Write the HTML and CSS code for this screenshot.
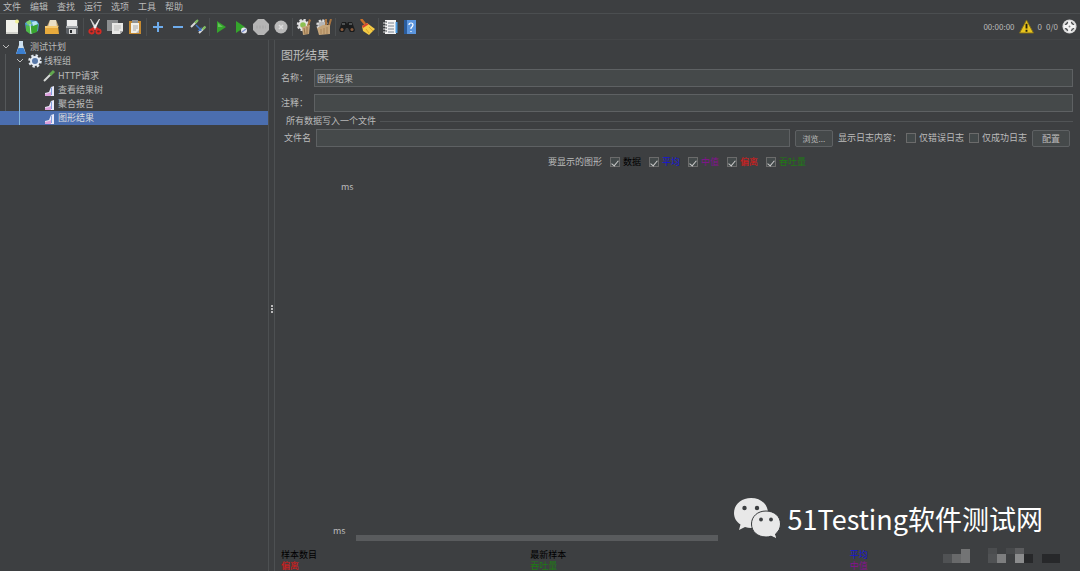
FILE: index.html
```html
<!DOCTYPE html>
<html lang="zh-CN">
<head>
<meta charset="utf-8">
<title>图形结果</title>
<link rel="stylesheet" href="styles.css">
</head>
<body>
<div class="app">
  <nav class="menu">
    <button>文件</button><button>编辑</button><button>查找</button><button>运行</button><button>选项</button><button>工具</button><button>帮助</button>
  </nav>

  <header class="toolbar">
    <div class="tools">
      <button aria-label="新建"><svg viewBox="0 0 16 16"><path d="M2 1h12v14H2z" fill="#f1f1ea"/><path d="M2 13h12v2H2z" fill="#d2d2cc"/><circle cx="13" cy="2.500" r="2" fill="#f2f29a"/></svg></button>
      <button aria-label="模板"><svg viewBox="0 0 16 16"><path d="M1 4l5-3 7 1 2 3-1 7-7 3-5-4z" fill="#4d9ed0"/><path d="M2 6l4 1v8l-4-3z" fill="#4db848"/><path d="M7 7l7-2-1 8-6 2z" fill="#39a52f"/><path d="M2 3l4-2 2 4-4 1z" fill="#7fd06c"/><path d="M8 3l4-1 2 3-5 2z" fill="#b7e3f2"/><path d="M6 5l1 10" stroke="#d9f2d4"/></svg></button>
      <button aria-label="打开"><svg viewBox="0 0 16 16"><path d="M3 7l3-6h6l3 7z" fill="#b99b6a"/><path d="M6 1h6l1 7H4z" fill="#eadfc6"/><path d="M1 7h13l1 8H1z" fill="#e8aa3c"/><path d="M1 7h13v2H1z" fill="#f6cb74"/></svg></button>
      <button aria-label="保存"><svg viewBox="0 0 16 16"><path d="M2 1h12v14H3l-1-1z" fill="#5d6166"/><path d="M3 1h10v6H3z" fill="#ececec"/><path d="M2 7h12v2H2z" fill="#a7aaad"/><path d="M5 10h7v5H5z" fill="#d9d9d9"/><path d="M6 11h2v3H6z" fill="#25282b"/></svg></button>
      <i class="sep"></i>
      <button aria-label="剪切"><svg viewBox="0 0 16 16"><path d="M3 0l1 0 6 9-2 2z" fill="#d4d4d4"/><path d="M13 0l-1 0-6 9 2 2z" fill="#f0f0f0"/><path d="M7 9l-2 2M9 9l2 2" stroke="#cf2a25" stroke-width="3"/><ellipse cx="4.500" cy="12.500" rx="2.200" ry="2" fill="#5b2a2a" stroke="#d62b24" stroke-width="1.800"/><ellipse cx="11.500" cy="12.500" rx="2.200" ry="2" fill="#5b2a2a" stroke="#d62b24" stroke-width="1.800"/></svg></button>
      <button aria-label="复制"><svg viewBox="0 0 16 16"><path d="M0 1h11v11H0z" fill="#8d8f90"/><path d="M5 4h11v8l-3 3H5z" fill="#e8e8e6"/><path d="M7 7h7M7 9h7M7 11h5" stroke="#bdbdbb"/><path d="M13 15v-3h3z" fill="#a9a9a9"/></svg></button>
      <button aria-label="粘贴"><svg viewBox="0 0 16 16"><path d="M2 2h12v13H2z" fill="#c58a32"/><path d="M4 4h8v10H4z" fill="#f0efe8"/><path d="M5 1h6v3H5z" fill="#8f9294"/><path d="M6 7h5M6 9h5M6 11h3" stroke="#aaa"/><path d="M9 14l3-3v3z" fill="#bbb"/></svg></button>
      <i class="sep"></i>
      <button aria-label="展开"><svg viewBox="0 0 16 16"><path d="M8 3v10M3 8h10" stroke="#6eacec" stroke-width="2"/></svg></button>
      <button aria-label="折叠"><svg viewBox="0 0 16 16"><path d="M3 8h10" stroke="#6eacec" stroke-width="2"/></svg></button>
      <button aria-label="切换"><svg viewBox="0 0 16 16"><path d="M1 8l6-6" stroke="#d8d8d8" stroke-width="2"/><path d="M5 4l3-3" stroke="#7cbc5c" stroke-width="2"/><path d="M9 14l6-6" stroke="#d8d8d8" stroke-width="2"/><path d="M12.500 10.500l3-3" stroke="#7cbc5c" stroke-width="2"/><path d="M6 6l4 4" stroke="#3d73c4" stroke-width="1.500"/><path d="M11.500 8v4h-4z" fill="#3d73c4"/></svg></button>
      <i class="sep"></i>
      <button aria-label="启动"><svg viewBox="0 0 16 16"><path d="M4 2l9 6-9 6z" fill="#35a52c"/><path d="M5 4l5 4H5z" fill="#65c35a"/></svg></button>
      <button aria-label="不停顿启动"><svg viewBox="0 0 16 16"><path d="M3 2l9 6-9 6z" fill="#35a52c"/><circle cx="11" cy="11.500" r="3" fill="#e4e4ea"/><path d="M9 13l4-3" stroke="#7a8fd0" stroke-width="1.500"/></svg></button>
      <button aria-label="停止"><svg viewBox="0 0 16 16"><path d="M5 0h6l5 5v6l-5 5H5l-5-5V5z" fill="#b5b5b5"/><path d="M3 8h10" stroke="#adadad" stroke-width="3" stroke-dasharray="2 1"/></svg></button>
      <button aria-label="关闭"><svg viewBox="0 0 16 16"><circle cx="8" cy="8" r="6.500" fill="#b9b9b9"/><path d="M6 6l4 4M10 6l-4 4" stroke="#dcdcdc" stroke-width="1.500"/></svg></button>
      <i class="sep"></i>
      <button aria-label="清除"><svg viewBox="0 0 16 16"><circle cx="7" cy="6" r="5" fill="none" stroke="#dedede" stroke-width="2.500" stroke-dasharray="2.200 1.700"/><circle cx="7" cy="6" r="3.800" fill="#8cc152" stroke="#e4e4e4" stroke-width="2"/><path d="M13 0l2 1-2 6h-2z" fill="#a87440"/><path d="M6 8l8-2-1 9-6 1z" fill="#c5a57a"/><path d="M8 9l1 6M11 8v7" stroke="#987348"/></svg></button>
      <button aria-label="清除全部"><svg viewBox="0 0 16 16"><circle cx="6" cy="6" r="4.500" fill="#b5b5b5" stroke="#dedede" stroke-width="2.500" stroke-dasharray="2 1.500"/><path d="M10 0l0 6M15 0l-2 7" stroke="#a87440" stroke-width="2"/><path d="M1 9l6-3 7 0v9L3 16z" fill="#c5a57a"/><path d="M5 10v5M8 9v6M11 8v7" stroke="#a98458"/></svg></button>
      <i class="sep"></i>
      <button aria-label="查找"><svg viewBox="0 0 16 16"><path d="M3 3h4l1 2 1-2h4l3 8-1 2h-4l-2-4H7l-2 4H1l-1-2z" fill="#1b1c1d"/><path d="M3 5h3M10 5h3" stroke="#85898b"/><circle cx="3" cy="10.500" r="1.500" fill="#8a5b3d"/><circle cx="13" cy="10.500" r="1.500" fill="#8a5b3d"/></svg></button>
      <button aria-label="重置搜索"><svg viewBox="0 0 16 16"><path d="M2 0l4 5" stroke="#c8702a" stroke-width="2.500"/><path d="M3 7l5-3 8 6-6 6-6-4z" fill="#f3cb45"/><path d="M3 7l5-3 1.500 1.500L4 9z" fill="#d8442f"/><path d="M7 10l3 4M10 8l4 4" stroke="#d9a52a"/></svg></button>
      <i class="sep"></i>
      <button aria-label="函数助手"><svg viewBox="0 0 16 16"><path d="M3 1h11v14H3z" fill="#f3f3f3"/><path d="M14.500 3v11" stroke="#4a9ae0" stroke-width="2"/><path d="M6 4h6M6 7h6M6 10h6M6 13h6" stroke="#7b8490"/><path d="M2 3h3M2 6h3M2 9h3M2 12h3" stroke="#33373a"/><path d="M1 4h3M1 7h3M1 10h3M1 13h3" stroke="#ddd"/></svg></button>
      <button aria-label="帮助"><svg viewBox="0 0 16 16"><path d="M2 1h12v14H2z" fill="#5b95dd"/><path d="M2 1h3v14H2z" fill="#2b5d9d"/><path d="M7 6q0-2 2-2t2 2q0 1-2 3v1M9 12v1" fill="none" stroke="#fff" stroke-width="1.200"/></svg></button>
    </div>
    <div class="status">
      <span>00:00:00</span>
      <svg viewBox="0 0 16 16"><path d="M8 1l7.500 14H.500z" fill="#e9c51d" stroke="#7d6a1a"/><path d="M8 5v5M8 11.500v2" stroke="#24200c" stroke-width="2"/></svg>
      <span>0</span><span>0/0</span>
      <svg viewBox="0 0 16 16"><circle cx="8" cy="8" r="7.500" fill="#dcdcdc"/><circle cx="8" cy="8" r="4.500" fill="none" stroke="#4a4c4e" stroke-width="1.500"/><path d="M8 2v12M2 8h12" stroke="#f4f4f4" stroke-width="3"/><circle cx="8" cy="8" r="1" fill="#888"/></svg>
    </div>
  </header>

  <div class="body">
    <aside class="side">
      <ul class="tree">
        <li>
          <div class="node"><svg class="arrow" viewBox="0 0 8 8"><path d="M1 2l3 3 3-3"/></svg><svg class="pic" viewBox="0 0 14 14"><path d="M5 1h4v4l3 9H2l3-9z" fill="#cfe0ee"/><path d="M4.500 8h5l2.500 6H2z" fill="#3b7fd0"/></svg>测试计划</div>
          <ul class="level1">
            <li>
              <div class="node"><svg class="arrow" viewBox="0 0 8 8"><path d="M1 2l3 3 3-3"/></svg><svg class="pic" viewBox="0 0 14 14"><circle cx="7" cy="7" r="5.500" fill="none" stroke="#dfe6ee" stroke-width="2.500" stroke-dasharray="2.300 2"/><circle cx="7" cy="7" r="4" fill="#5878a8" stroke="#e6ecf4" stroke-width="2"/></svg>线程组</div>
              <ul class="level2">
                <li class="node"><i class="arrow"></i><svg class="pic" viewBox="0 0 14 14"><path d="M2 12l7-7" stroke="#d6d9d6" stroke-width="2"/><path d="M8 6l4-4" stroke="#61a84f" stroke-width="3"/></svg>HTTP请求</li>
                <li class="node"><i class="arrow"></i><svg class="pic" viewBox="0 0 14 14"><path d="M3 13v-3l4-1 2-5 3-1v10z" fill="#e9e9f8"/><path d="M3 13v-2l4-1 2-1v4z" fill="#dda0dc"/><path d="M9 5l1-1v8H9z" fill="#7f9fe0"/></svg>查看结果树</li>
                <li class="node"><i class="arrow"></i><svg class="pic" viewBox="0 0 14 14"><path d="M3 13v-3l4-1 2-5 3-1v10z" fill="#e9e9f8"/><path d="M3 13v-2l4-1 2-1v4z" fill="#dda0dc"/><path d="M9 5l1-1v8H9z" fill="#7f9fe0"/></svg>聚合报告</li>
                <li class="node selected"><i class="arrow"></i><svg class="pic" viewBox="0 0 14 14"><path d="M3 13v-3l4-1 2-5 3-1v10z" fill="#e9e9f8"/><path d="M3 13v-2l4-1 2-1v4z" fill="#dda0dc"/><path d="M9 5l1-1v8H9z" fill="#7f9fe0"/></svg>图形结果</li>
              </ul>
            </li>
          </ul>
        </li>
      </ul>
    </aside>
    <div class="splitter"><i></i><i></i><i></i></div>

    <main class="panel">
      <h1>图形结果</h1>
      <div class="row"><label for="name">名称：</label><input class="field" id="name" type="text" value="图形结果"></div>
      <div class="row"><label for="note">注释：</label><input class="field" id="note" type="text"></div>
      <section class="group">
        <h2>所有数据写入一个文件</h2>
        <div class="filerow">
          <label for="file">文件名</label><input class="field" id="file" type="text">
          <button class="btn browse">浏览...</button>
          <span class="logs">显示日志内容：</span>
          <label class="check"><input type="checkbox">仅错误日志</label>
          <label class="check"><input type="checkbox">仅成功日志</label>
          <button class="btn">配置</button>
        </div>
      </section>
      <div class="series">
        <span>要显示的图形</span>
        <label class="check black"><input type="checkbox" checked>数据</label>
        <label class="check blue"><input type="checkbox" checked>平均</label>
        <label class="check purple"><input type="checkbox" checked>中值</label>
        <label class="check red"><input type="checkbox" checked>偏离</label>
        <label class="check green"><input type="checkbox" checked>吞吐量</label>
      </div>
      <div class="graph">
        <span class="unit">ms</span>
        <div class="axis"><span>ms</span><div class="scroll"></div></div>
      </div>
      <div class="stats">
        <span class="black">样本数目</span><span class="black">最新样本</span><span class="blue">平均</span>
        <span class="red">偏离</span><span class="green">吞吐量</span><span class="purple">中值</span>
      </div>
    </main>
  </div>

  <div class="brand">
    <svg viewBox="0 0 47 41"><path d="M17 0C7 0 0 6.500 0 15c0 5 2.500 9 6.500 11.500L5 32l6-3c2 .6 4 1 6 1 10 0 17-6.500 17-15S27 0 17 0z" fill="#e8e8e8"/><circle cx="10.500" cy="10" r="2.200" fill="#3c3f41"/><circle cx="23" cy="10" r="2.200" fill="#3c3f41"/><path d="M32 13c-8.500 0-14.500 5.500-14.500 13S23.500 39 32 39c2 0 3.500-.3 5-.8l6 2.800-1.500-5c3-2.300 5-5.800 5-10 0-7.500-6-13-14.500-13z" fill="#e8e8e8" stroke="#35383a"/><circle cx="27" cy="21.500" r="1.900" fill="#3c3f41"/><circle cx="37" cy="21.500" r="1.900" fill="#3c3f41"/></svg>
    <span>51Testing软件测试网</span>
  </div>
  <svg class="mosaic" viewBox="0 0 117 15" shape-rendering="crispEdges"><path d="M0 6h9v9H0z" fill="#505254"/><path d="M9 6h9v9H9z" fill="#68696a"/><path d="M18 1h9v14h-9z" fill="#737475"/><path d="M45 0h9v6h-9z" fill="#4b4d4f"/><path d="M45 6h9v9h-9z" fill="#505254"/><path d="M54 6h9v9h-9z" fill="#7d7e7f"/><path d="M63 0h9v6h-9z" fill="#47494b"/><path d="M72 0h9v6h-9z" fill="#5b5c5e"/><path d="M72 6h9v9h-9z" fill="#8b8c8d"/><path d="M81 6h9v9h-9zM99 6h18v9H99z" fill="#27282a"/></svg>
</div>
</body>
</html>
```

FILE: styles.css
```css
* { box-sizing: border-box; }

body {
  margin: 0;
  background: #3d3f41;
  color: #bbb;
  font: 9px/14px "Noto Sans CJK SC", "Noto Sans", sans-serif;
}

button, input { font: inherit; color: inherit; margin: 0; padding: 0; }
button { background: none; border: 0; }
ul { list-style: none; margin: 0; padding: 0; }
svg { display: block; flex: none; }

.app {
  position: relative;
  display: flex;
  flex-direction: column;
  height: 100vh;
  overflow: hidden;
}

.menu {
  display: flex;
  gap: 9px;
  padding: 0 3px;
  line-height: 13px;
  border-bottom: 1px solid #4b4e50;
}

.toolbar {
  display: flex;
  justify-content: space-between;
  align-items: center;
  height: 26px;
  padding: 0 3px 0 4px;
  border-bottom: 1px solid #434547;
}
.tools { display: flex; align-items: center; }
.tools button { width: 16px; height: 16px; margin-right: 4px; }
.sep { width: 1px; height: 18px; margin: 0 3px 0 -1px; background: #4b4e50; }
.status { display: flex; align-items: center; gap: 4px; font-size: 8px; }
.status svg { width: 15px; height: 15px; }

.body { display: flex; flex: 1; min-height: 0; }
.side { flex: 0 0 268px; }

.node { display: flex; align-items: center; height: 14px; padding-left: 2px; }
.arrow { width: 8px; height: 8px; margin-right: 4px; fill: none; stroke: #bbb; }
.pic { width: 14px; height: 14px; margin-right: 2px; }
.level1 { position: relative; }
.level1 .node { padding-left: 16px; }
.level2 { position: relative; padding-top: 1px; }
.level2 .node { padding-left: 30px; }
.level1::before, .level2::before {
  content: "";
  position: absolute;
  top: 0;
  bottom: 0;
  left: 5px;
  width: 1px;
  background: #55585a;
}
.level2::before { left: 19px; background: #7fb4dc; }
.node.selected { background: #4b6eaf; color: #ddd; }

.splitter {
  display: flex;
  flex-direction: column;
  align-items: center;
  justify-content: center;
  gap: 1px;
  flex: 0 0 7px;
  padding-top: 7px;
  border: solid #4d5052;
  border-width: 0 1px;
}
.splitter i { width: 2px; height: 2px; background: #bbb; }

.panel {
  display: flex;
  flex-direction: column;
  flex: 1;
  min-width: 0;
  padding: 6px 7px 0 6px;
}
h1 { margin: 0 0 5px; font-size: 12px; line-height: 18px; font-weight: 400; }
.row { display: flex; align-items: center; gap: 6px; margin-bottom: 7px; }
.field {
  flex: 1;
  min-width: 0;
  height: 18px;
  padding: 0 2px;
  background: #45494a;
  border: 1px solid #5e6163;
}

.group { margin-top: -3px; }
h2 {
  display: flex;
  align-items: center;
  gap: 4px;
  margin: 0 0 3px;
  padding-left: 5px;
  font-size: 9px;
  line-height: 10px;
  font-weight: 400;
}
h2::after { content: ""; flex: 1; height: 1px; background: #515456; }
.filerow { display: flex; align-items: center; gap: 5px; padding: 0 3px; }
.browse { font-size: 8px; }
.btn {
  width: 38px;
  height: 17px;
  line-height: 15px;
  background: #45494a;
  border: 1px solid #5e6163;
  border-radius: 2px;
}

.check { display: flex; align-items: center; gap: 3px; }
.check input {
  appearance: none;
  display: grid;
  place-items: center;
  width: 10px;
  height: 10px;
  background: #43494a;
  border: 1px solid #6b6b6b;
}
.check input:checked::before {
  content: "";
  width: 3px;
  height: 6px;
  border: solid #ccc;
  border-width: 0 1px 1px 0;
  transform: rotate(40deg);
}

.series {
  display: flex;
  justify-content: center;
  align-items: center;
  gap: 8px;
  height: 12px;
  margin-top: 9px;
}
.black { color: #000; }
.blue { color: #1414d8; }
.purple { color: #861092; }
.red { color: #e01818; }
.green { color: #1f7a14; }

.graph {
  display: flex;
  flex-direction: column;
  justify-content: space-between;
  flex: 1;
  padding: 14px 0 8px 52px;
  line-height: 10px;
}
.unit { padding-left: 8px; }
.axis { display: flex; align-items: flex-end; gap: 10px; }
.axis span { margin-bottom: 5px; }
.scroll { width: 49%; height: 6px; background: #595b5d; }

.stats {
  display: grid;
  grid-template-columns: 249fr 319fr 223fr;
  line-height: 11px;
}

.brand {
  position: absolute;
  right: 37px;
  bottom: 32px;
  display: flex;
  align-items: center;
  gap: 7px;
  color: #fff;
  font-size: 27px;
  line-height: 41px;
}
.brand svg { width: 47px; height: 41px; }
.mosaic {
  position: absolute;
  right: 20px;
  bottom: 8px;
  width: 117px;
  height: 15px;
}
```
